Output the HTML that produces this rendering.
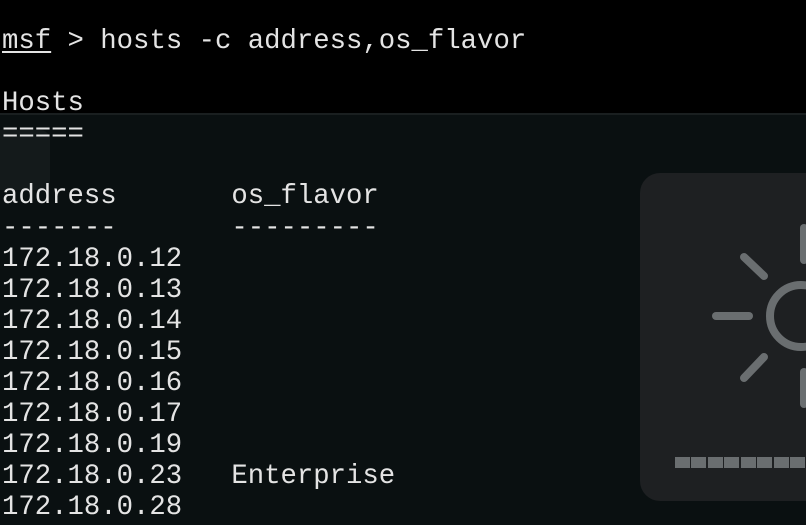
<!DOCTYPE html>
<html><head><style>
html,body{margin:0;padding:0}
body{width:806px;height:525px;overflow:hidden;position:relative;background:#0a1011}
.top{position:absolute;left:0;top:0;width:806px;height:113px;background:#000}
.line{position:absolute;left:0;top:113px;width:806px;height:2px;background:#1a1f20}
pre{position:absolute;left:2px;top:26px;margin:0;font-family:"Liberation Mono",monospace;font-size:27.3px;line-height:31.1px;color:#e4e4e4;letter-spacing:0}
u{text-decoration:underline;text-underline-offset:3px}
.ghost{position:absolute;left:0;top:130px;width:50px;height:60px;background:#141a1b;border-radius:0 10px 10px 0}
.panel{position:absolute;left:640px;top:173px;width:200px;height:328px;background:#1e2022;border-radius:20px}
.bar{position:absolute;top:457px;height:11px;width:15px;background:#6a6e70}
</style></head><body>
<div class="top"></div><div class="line"></div>
<div class="ghost"></div>
<div class="panel"></div>
<svg style="position:absolute;left:0;top:0" width="806" height="525">
<g stroke="#6a6e70" stroke-width="8" stroke-linecap="round" fill="none">
<circle cx="801" cy="316" r="31"/>
<line x1="716" y1="316" x2="749" y2="316"/>
<line x1="744" y1="257" x2="764" y2="276"/>
<line x1="744" y1="378" x2="764" y2="357"/>
<line x1="804" y1="228" x2="804" y2="260"/>
<line x1="804" y1="372" x2="804" y2="404"/>
</g>
</svg>
<div class="bar" style="left:675px"></div><div class="bar" style="left:691px"></div><div class="bar" style="left:708px"></div><div class="bar" style="left:724px"></div><div class="bar" style="left:741px"></div><div class="bar" style="left:757px"></div><div class="bar" style="left:774px"></div><div class="bar" style="left:790px"></div>
<pre><u>msf</u> &gt; hosts -c address,os_flavor

Hosts
=====

address       os_flavor
-------       ---------
172.18.0.12
172.18.0.13
172.18.0.14
172.18.0.15
172.18.0.16
172.18.0.17
172.18.0.19
172.18.0.23   Enterprise
172.18.0.28</pre>
</body></html>
